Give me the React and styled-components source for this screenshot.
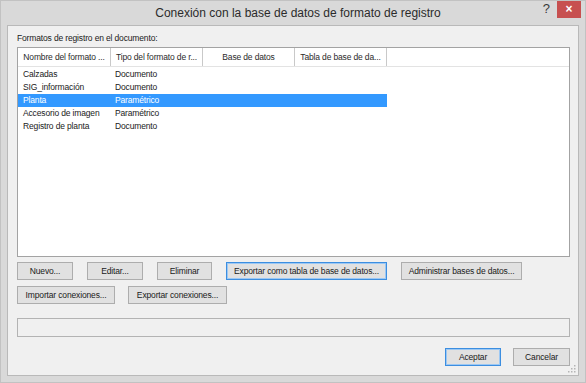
import React from "react";
import styled, { createGlobalStyle } from "styled-components";

const Global = createGlobalStyle`
  html, body { margin: 0; padding: 0; background: #ffffff; }
  body { font-family: "Liberation Sans", Arial, sans-serif; }
  * { box-sizing: border-box; }
`;

const Window = styled.div`
  width: 586px;
  height: 383px;
  background: #d9d9d9;
  border: 1px solid #c2c2c2;
  display: flex;
  flex-direction: column;
`;

const TitleBar = styled.div`
  height: 24px;
  display: flex;
  align-items: flex-start;
  flex-shrink: 0;
`;

const Spacer = styled.div`
  width: 49px;
  flex-shrink: 0;
`;

const Title = styled.div`
  flex: 1;
  text-align: center;
  padding-left: 10px;
  font-size: 12px;
  line-height: 24px;
  color: #2b2b2b;
  white-space: nowrap;
`;

const Controls = styled.div`
  width: 49px;
  flex-shrink: 0;
  display: flex;
  align-items: flex-start;
  justify-content: flex-end;
  padding-right: 4px;
  gap: 7px;
`;

const Help = styled.span`
  font-size: 13px;
  line-height: 14px;
  margin-top: 1px;
  color: #3a3a3a;
`;

const Close = styled.div`
  width: 24px;
  height: 17px;
  background: #c75050;
  color: #ffffff;
  font-size: 12px;
  font-weight: bold;
  line-height: 16px;
  text-align: center;
`;

const Panel = styled.div`
  position: relative;
  flex: 1;
  margin: 0 6px 6px 6px;
  background: #f0f0f0;
  border: 1px solid #b9b9b9;
  padding: 6px 8px 9px 9px;
  display: flex;
  flex-direction: column;
  font-size: 8.5px;
  letter-spacing: -0.15px;
  color: #1a1a1a;
`;

const Label = styled.div`
  line-height: 12px;
  height: 12px;
`;

const List = styled.div`
  margin-top: 3px;
  height: 210px;
  background: #ffffff;
  border: 1px solid #a3a3a3;
  display: flex;
  flex-direction: column;
`;

const Header = styled.div`
  display: flex;
  height: 19px;
  border-bottom: 1px solid #e3e3e3;
  flex-shrink: 0;
`;

const HeadCell = styled.div`
  width: ${(p) => p.$w}px;
  flex-shrink: 0;
  border-right: 1px solid #c9c9c9;
  text-align: center;
  line-height: 18px;
  color: #2a2a2a;
  white-space: nowrap;
  overflow: hidden;
`;

const Rows = styled.div`
  display: flex;
  flex-direction: column;
  padding-top: 1px;
`;

const Row = styled.div`
  display: flex;
  width: 369px;
  height: 13px;
  background: ${(p) => (p.$sel ? "#3399ff" : "transparent")};
  color: ${(p) => (p.$sel ? "#ffffff" : "#1a1a1a")};
`;

const Cell = styled.div`
  width: ${(p) => p.$w}px;
  flex-shrink: 0;
  padding-left: ${(p) => p.$pl}px;
  line-height: 13px;
  white-space: nowrap;
  overflow: hidden;
`;

const ButtonRow = styled.div`
  display: flex;
  gap: ${(p) => p.$gap}px;
  margin-top: ${(p) => p.$mt}px;
  justify-content: ${(p) => (p.$end ? "flex-end" : "flex-start")};
`;

const Button = styled.div`
  width: ${(p) => p.$w}px;
  height: 18px;
  flex-shrink: 0;
  background: #e1e1e1;
  border: 1px solid ${(p) => (p.$focus ? "#3c8ee0" : "#adadad")};
  box-shadow: ${(p) => (p.$focus ? "inset 0 0 0 1px #9cc8f4" : "none")};
  text-align: center;
  line-height: 16px;
  color: #1a1a1a;
  white-space: nowrap;
`;

const Status = styled.div`
  margin-top: 14px;
  height: 19px;
  border: 1px solid #b3b3b3;
  background: #f0f0f0;
`;

const Grip = styled.svg`
  position: absolute;
  right: 2px;
  bottom: 2px;
`;

const cols = [93, 92, 92, 92];

const rows = [
  ["Calzadas", "Documento"],
  ["SIG_información", "Documento"],
  ["Planta", "Paramétrico", true],
  ["Accesorio de imagen", "Paramétrico"],
  ["Registro de planta", "Documento"],
];

export default function App() {
  return (
    <>
      <Global />
      <Window>
        <TitleBar>
          <Spacer />
          <Title>Conexión con la base de datos de formato de registro</Title>
          <Controls>
            <Help>?</Help>
            <Close>×</Close>
          </Controls>
        </TitleBar>
        <Panel>
          <Label>Formatos de registro en el documento:</Label>
          <List>
            <Header>
              <HeadCell $w={cols[0]}>Nombre del formato ...</HeadCell>
              <HeadCell $w={cols[1]}>Tipo del formato de r...</HeadCell>
              <HeadCell $w={cols[2]}>Base de datos</HeadCell>
              <HeadCell $w={cols[3]}>Tabla de base de da...</HeadCell>
            </Header>
            <Rows>
              {rows.map(([a, b, sel]) => (
                <Row key={a} $sel={sel}>
                  <Cell $w={cols[0]} $pl={5}>{a}</Cell>
                  <Cell $w={cols[1]} $pl={4}>{b}</Cell>
                  <Cell $w={cols[2]} $pl={4} />
                  <Cell $w={cols[3]} $pl={4} />
                </Row>
              ))}
            </Rows>
          </List>
          <ButtonRow $gap={14} $mt={5}>
            <Button $w={56}>Nuevo...</Button>
            <Button $w={56}>Editar...</Button>
            <Button $w={55}>Eliminar</Button>
            <Button $w={161} $focus>Exportar como tabla de base de datos...</Button>
            <Button $w={121}>Administrar bases de datos...</Button>
          </ButtonRow>
          <ButtonRow $gap={13} $mt={6}>
            <Button $w={98}>Importar conexiones...</Button>
            <Button $w={99}>Exportar conexiones...</Button>
          </ButtonRow>
          <Status />
          <ButtonRow $gap={12} $mt={11} $end>
            <Button $w={56} $focus>Aceptar</Button>
            <Button $w={57}>Cancelar</Button>
          </ButtonRow>
          <Grip width="8" height="8" viewBox="0 0 8 8">
            <rect x="6" y="0" width="1.5" height="1.5" fill="#b5b5b5" />
            <rect x="3" y="3" width="1.5" height="1.5" fill="#b5b5b5" />
            <rect x="6" y="3" width="1.5" height="1.5" fill="#b5b5b5" />
            <rect x="0" y="6" width="1.5" height="1.5" fill="#b5b5b5" />
            <rect x="3" y="6" width="1.5" height="1.5" fill="#b5b5b5" />
            <rect x="6" y="6" width="1.5" height="1.5" fill="#b5b5b5" />
          </Grip>
        </Panel>
      </Window>
    </>
  );
}
